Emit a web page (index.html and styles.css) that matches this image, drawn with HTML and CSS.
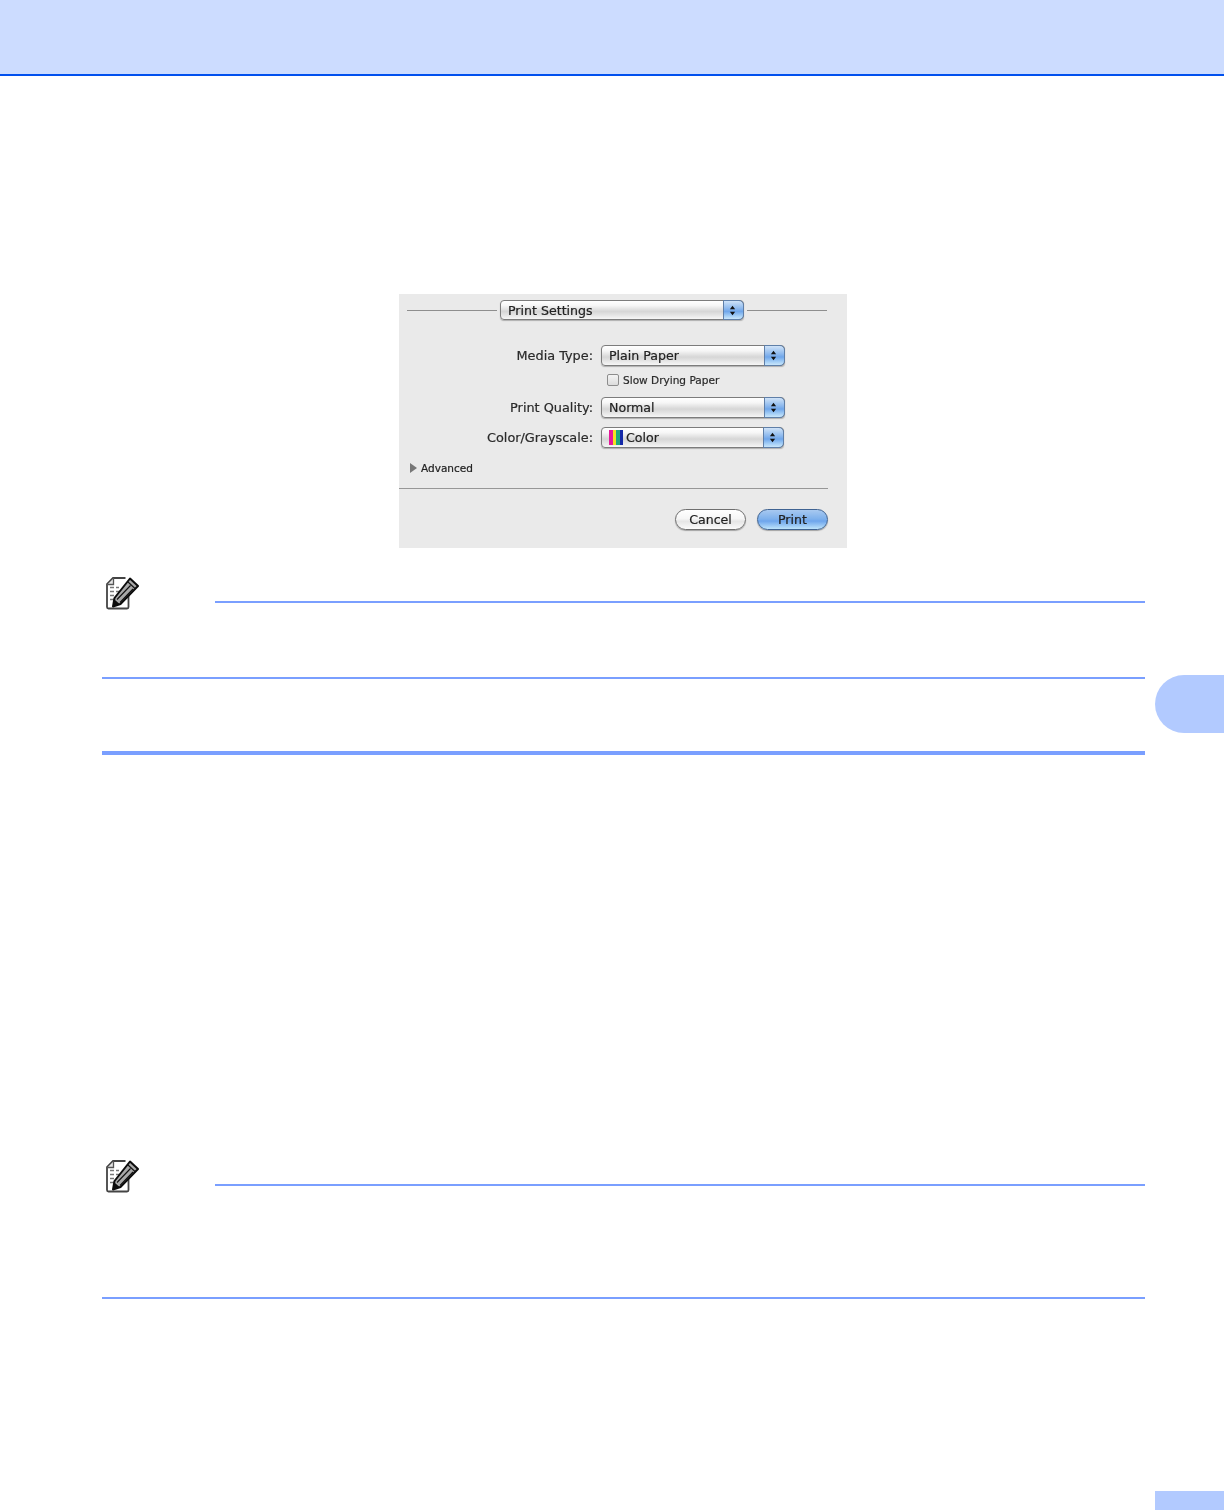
FILE: index.html
```html
<!DOCTYPE html>
<html lang="en">
<head>
<meta charset="utf-8">
<title>Print Settings</title>
<link rel="stylesheet" href="styles.css">
</head>
<body>
<svg class="defs" width="0" height="0" aria-hidden="true">
  <symbol id="note" viewBox="0 0 34 34">
    <path d="M8 1H21L10 20V30.5H3.5A1.5 1.5 0 0 1 2 29V7Z" fill="#fff"/>
    <path d="M20.5 1H8L2 7V30A1.5 1.5 0 0 0 3.5 31.5H22A1.5 1.5 0 0 0 23.5 30V15" fill="none" stroke="#444" stroke-width="1.8"/>
    <path d="M2.5 7.5H8.5V1.5" fill="#e4e4e4" stroke="#555" stroke-width="1.3"/>
    <path d="M5 10.5h4M11 10.5h3M5 14.5h4M11 14.5h3M5 18.5h4M5 22.5h4" stroke="#777" stroke-width="1.7"/>
    <path d="M25 1.5 33 9 15.5 27 8 29.5 9.5 21Z" fill="#a8a8a8" stroke="#0c0c0c" stroke-width="2" stroke-linejoin="round"/>
    <path d="M22.5 4.5 30.5 12M12 22.5 25.5 8.5M15 25.5 28 12" fill="none" stroke="#111" stroke-width="1.1"/>
    <path d="M8 29.5 9.4 22.5 15 27.2Z" fill="#0c0c0c"/>
  </symbol>
  <symbol id="updown" viewBox="0 0 8 12">
    <path d="M4 0.5 7 4.5H1ZM4 11.5 1 7.5H7Z" fill="#111"/>
  </symbol>
</svg>

<header class="top-band"></header>

<aside class="chapter-tab"></aside>

<main class="page">
  <section class="dialog">
    <div class="title-row">
      <span class="rule rule-left"></span>
      <div class="popup popup-title"><span class="popup-text">Print Settings</span><span class="stepper"><svg class="arrows"><use href="#updown"/></svg></span></div>
      <span class="rule rule-right"></span>
    </div>

    <div class="form">
      <div class="field field-media">
        <span class="label">Media Type:</span>
        <div class="popup"><span class="popup-text">Plain Paper</span><span class="stepper"><svg class="arrows"><use href="#updown"/></svg></span></div>
      </div>
      <div class="check-row"><span class="checkbox"></span><span class="check-label">Slow Drying Paper</span></div>
      <div class="field field-quality">
        <span class="label">Print Quality:</span>
        <div class="popup"><span class="popup-text">Normal</span><span class="stepper"><svg class="arrows"><use href="#updown"/></svg></span></div>
      </div>
      <div class="field field-color">
        <span class="label">Color/Grayscale:</span>
        <div class="popup popup-narrow"><span class="swatch"><i class="s1"></i><i class="s2"></i><i class="s3"></i><i class="s4"></i></span><span class="popup-text">Color</span><span class="stepper"><svg class="arrows"><use href="#updown"/></svg></span></div>
      </div>
    </div>

    <div class="advanced"><span class="disclosure"></span><span>Advanced</span></div>
    <div class="separator"></div>
    <div class="buttons">
      <span class="btn btn-cancel">Cancel</span>
      <span class="btn btn-print">Print</span>
    </div>
  </section>

  <section class="note note-first">
    <div class="note-head"><svg class="note-icon"><use href="#note"/></svg><span class="note-rule"></span></div>
    <div class="note-body note-body-first"></div>
  </section>

  <div class="thick-rule"></div>

  <section class="note note-second">
    <div class="note-head"><svg class="note-icon"><use href="#note"/></svg><span class="note-rule"></span></div>
    <div class="note-body note-body-second"></div>
  </section>

  <div class="page-chip"></div>
</main>
</body>
</html>
```

FILE: styles.css
```css
* { box-sizing: border-box; }
html, body { margin: 0; padding: 0; background: #fff; }
body { width: 1224px; height: 1510px; position: relative; overflow: hidden; font-family: "DejaVu Sans", "Liberation Sans", sans-serif; }
.defs { position: absolute; }

.top-band { height: 76px; background: #ccdcff; border-bottom: 2px solid #0050ee; }

.chapter-tab { position: absolute; left: 1155px; top: 675px; width: 69px; height: 58px; background: #b2caff; border-radius: 29px 0 0 29px; }

.page { padding: 218px 79px 0 102px; display: flow-root; }

/* dialog */
.dialog { width: 448px; height: 254px; margin-left: 297px; background: #eaeaea; padding-top: 6px; color: #222; font-size: 12.6px; -webkit-text-stroke: 0.2px; filter: blur(0.45px); }
.title-row { display: flex; align-items: center; gap: 3px; padding: 0 20px 0 8px; }
.rule { height: 1px; background: #8e8e8e; }
.rule-left { width: 90px; }
.rule-right { width: 80px; }

.popup { position: relative; display: flex; align-items: center; width: 184px; height: 21px; padding-left: 7px; border: 1px solid #7c7c7c; border-radius: 4px; background: linear-gradient(#ffffff 0%, #f6f6f6 25%, #d6d6d6 58%, #e2e2e2 75%, #f6f6f6 100%); box-shadow: 0 1px 1px rgba(0,0,0,.25); }
.popup-title { width: 244px; height: 20px; flex: none; }
.popup-narrow { width: 183px; }
.popup-text { line-height: 1; padding-top: 2px; color: #222; }
.stepper { position: absolute; right: -1px; top: -1px; bottom: -1px; width: 21px; padding-right: 2px; display: flex; align-items: center; justify-content: center; border: 1px solid #5f7fa8; border-radius: 0 5px 5px 0; background: linear-gradient(#cfe3f8 0%, #8fbaee 40%, #6fa6ea 58%, #a9d2f7 85%, #c9e6fb 100%); }
.arrows { width: 7px; height: 11px; }

.form { margin-top: 25px; padding-left: 202px; }
.field { display: flex; align-items: center; position: relative; }
.label { position: absolute; right: 100%; margin-right: 8px; font-size: 12.85px; white-space: nowrap; color: #2a2a2a; }
.field-quality { margin-top: 11px; }
.field-color { margin-top: 9px; }

.check-row { display: flex; align-items: center; gap: 5px; margin-top: 8px; padding-left: 6px; height: 12px; font-size: 10.55px; color: #2a2a2a; }
.checkbox { width: 12px; height: 12px; margin-left: -0.5px; margin-right: -0.5px; border: 1px solid #8d8d8d; border-radius: 2px; background: linear-gradient(#f4f4f4, #dcdcdc); }

.swatch { display: flex; height: 15px; margin-right: 3px; }
.swatch i { display: block; width: 3.5px; }
.s1 { background: #e5189a; }
.s2 { background: #f2e321; }
.s3 { background: #1eaa7c; }
.s4 { background: #1428a8; }

.advanced { display: flex; align-items: center; gap: 4px; margin-top: 14px; padding-left: 11px; height: 12px; font-size: 10.5px; color: #222; }
.disclosure { width: 0; height: 0; border-left: 7px solid #777; border-top: 5px solid transparent; border-bottom: 5px solid transparent; }

.separator { width: 429px; height: 1px; margin-top: 14px; background: #979797; }

.buttons { display: flex; justify-content: flex-end; gap: 11px; width: 429px; margin-top: 20px; }
.btn { width: 71px; height: 21px; border-radius: 11px; display: flex; align-items: center; justify-content: center; }
.btn-cancel { border: 1px solid #6f6f6f; background: linear-gradient(#fff 0%, #f6f6f6 45%, #e6e6e6 60%, #fbfbfb 100%); box-shadow: 0 1px 1px rgba(0,0,0,.3); }
.btn-print { border: 1px solid #3f6392; background: linear-gradient(#a8c9f0 0%, #7db0ec 48%, #6ea5ec 58%, #bde3fb 100%); box-shadow: 0 1px 1px rgba(0,0,0,.3); }

/* notes */
.note-head { display: flex; align-items: flex-end; height: 28px; }
.note-icon { width: 34px; height: 34px; margin: 0 0 -8px 3px; flex: none; }
.note-rule { flex: 1; height: 2px; margin-left: 76px; background: #7a9fff; }
.note-body { border-bottom: 2px solid #7a9fff; }
.note-first { margin-top: 27px; }
.note-body-first { height: 76px; }
.thick-rule { height: 4px; margin-top: 72px; background: #7a9fff; }
.note-second { margin-top: 403px; }
.note-body-second { height: 113px; }

.page-chip { position: absolute; left: 1155px; top: 1491px; width: 69px; height: 19px; background: #b2caff; }
```
